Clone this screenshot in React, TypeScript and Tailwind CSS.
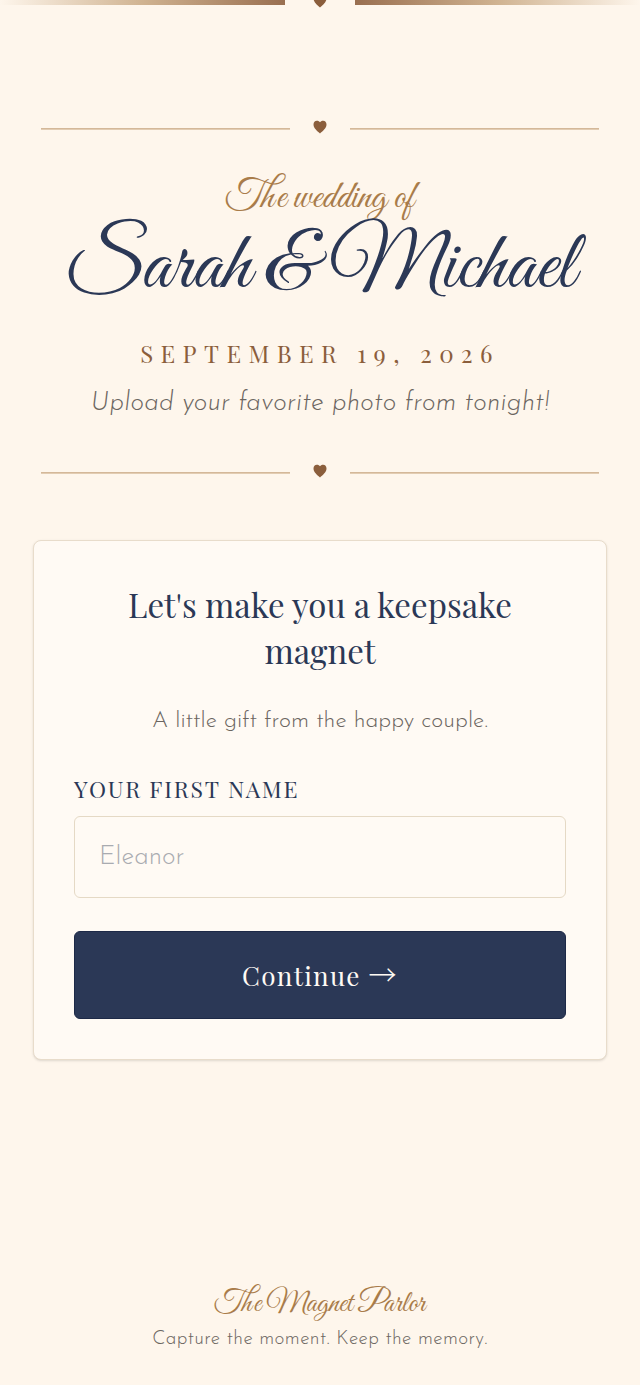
import { useState } from "react";

const serif = "font-['Playfair_Display','Liberation_Serif',serif]";
const script = "font-['Great_Vibes','Liberation_Serif',serif]";
const sans = "font-['Josefin_Sans',Lato,sans-serif] font-light";

function Heart() {
  return (
    <svg viewBox="0 0 14 14" className="h-3.5 w-3.5 shrink-0 fill-[#8b5e3c]" aria-hidden="true">
      <path d="M7 13.4C4.600 11.300.5 8.300.5 4.500.5 2.200 1.900.7 3.800.7 5.300.7 6.500 1.300 7 2.300 7.500 1.300 8.700.7 10.200.7c1.900 0 3.300 1.500 3.300 3.800C13.500 8.300 9.400 11.300 7 13.400Z" />
    </svg>
  );
}

function Divider() {
  return (
    <div className="flex items-center gap-[23px] px-2">
      <span className="mt-[3px] h-px flex-1 bg-[#d4b899] shadow-[0_1px_0_#e2ccb2]" />
      <Heart />
      <span className="mt-[3px] h-px flex-1 bg-[#d4b899] shadow-[0_1px_0_#e2ccb2]" />
    </div>
  );
}

export default function App() {
  const [name, setName] = useState("");

  return (
    <div className="flex min-h-screen flex-col bg-[#fef6ec]">
      <div className="flex h-[5px] items-center gap-7">
        <span className="h-full flex-1 bg-linear-to-r from-transparent via-[#d0b391] to-[#996f50]" />
        <span className="-mt-1">
          <Heart />
        </span>
        <span className="h-full flex-1 bg-linear-to-l from-transparent via-[#d0b391] to-[#996f50]" />
      </div>

      <main className="flex flex-1 flex-col px-[33px] pt-[115px]">
        <Divider />
        <header className="flex flex-col items-center pt-[43px] pb-10 text-center">
          <p className={`${script} text-[39px] leading-[44px] text-[#a97c4a]`}>The wedding of</p>
          <h1 className={`${script} mt-[3px] text-[83px] leading-[88px] whitespace-nowrap text-[#2b3856]`}>
            Sarah &amp; Michael
          </h1>
          <p className={`${serif} mt-[21px] text-2xl leading-10 tracking-[0.31em] text-[#8b5e3c] uppercase`}>
            September 19, 2026
          </p>
          <p className={`${sans} mt-[11px] text-[26px] leading-10 tracking-[0.01em] text-[#6b6560] italic`}>
            Upload your favorite photo from tonight!
          </p>
        </header>
        <Divider />

        <form
          onSubmit={(e) => e.preventDefault()}
          className="mt-[62px] flex flex-col rounded-lg border border-[#e8dccb] bg-[#fffaf4] p-10 shadow-sm"
        >
          <h2 className={`${serif} text-center text-[33px] leading-[46px] text-[#2b3856]`}>
            Let's make you a keepsake magnet
          </h2>
          <p className={`${sans} mt-[31px] text-center text-[23px] leading-9 text-[#6b6560]`}>
            A little gift from the happy couple.
          </p>
          <label
            htmlFor="first-name"
            className={`${serif} mt-[31px] text-[23px] leading-9 tracking-[0.08em] text-[#2b3856] uppercase`}
          >
            Your first name
          </label>
          <input
            id="first-name"
            type="text"
            value={name}
            onChange={(e) => setName(e.target.value)}
            placeholder="Eleanor"
            className={`${sans} mt-[9px] h-[82px] w-full rounded-md border border-[#e5d9c5] bg-[#fffaf4] px-6 text-[26px] text-[#2b3856] placeholder:text-[#a9abb0]`}
          />
          <button
            type="submit"
            className={`${serif} mt-[33px] h-[88px] rounded-md border border-[#1d2947] bg-[#2b3856] text-[26px] tracking-wider text-[#fffaf4]`}
          >
            Continue <span className="font-['Noto_Sans_CJK_JP',sans-serif] text-[28px] leading-none font-light">→</span>
          </button>
        </form>
      </main>

      <footer className="flex flex-col items-center px-8 pt-10 pb-[27px] text-center">
        <p className={`${script} text-[30px] leading-9 text-[#a97c4a]`}>The Magnet Parlor</p>
        <p className={`${sans} text-[19px] leading-9 tracking-[0.02em] text-[#6b6560]`}>
          Capture the moment. Keep the memory.
        </p>
      </footer>
    </div>
  );
}
